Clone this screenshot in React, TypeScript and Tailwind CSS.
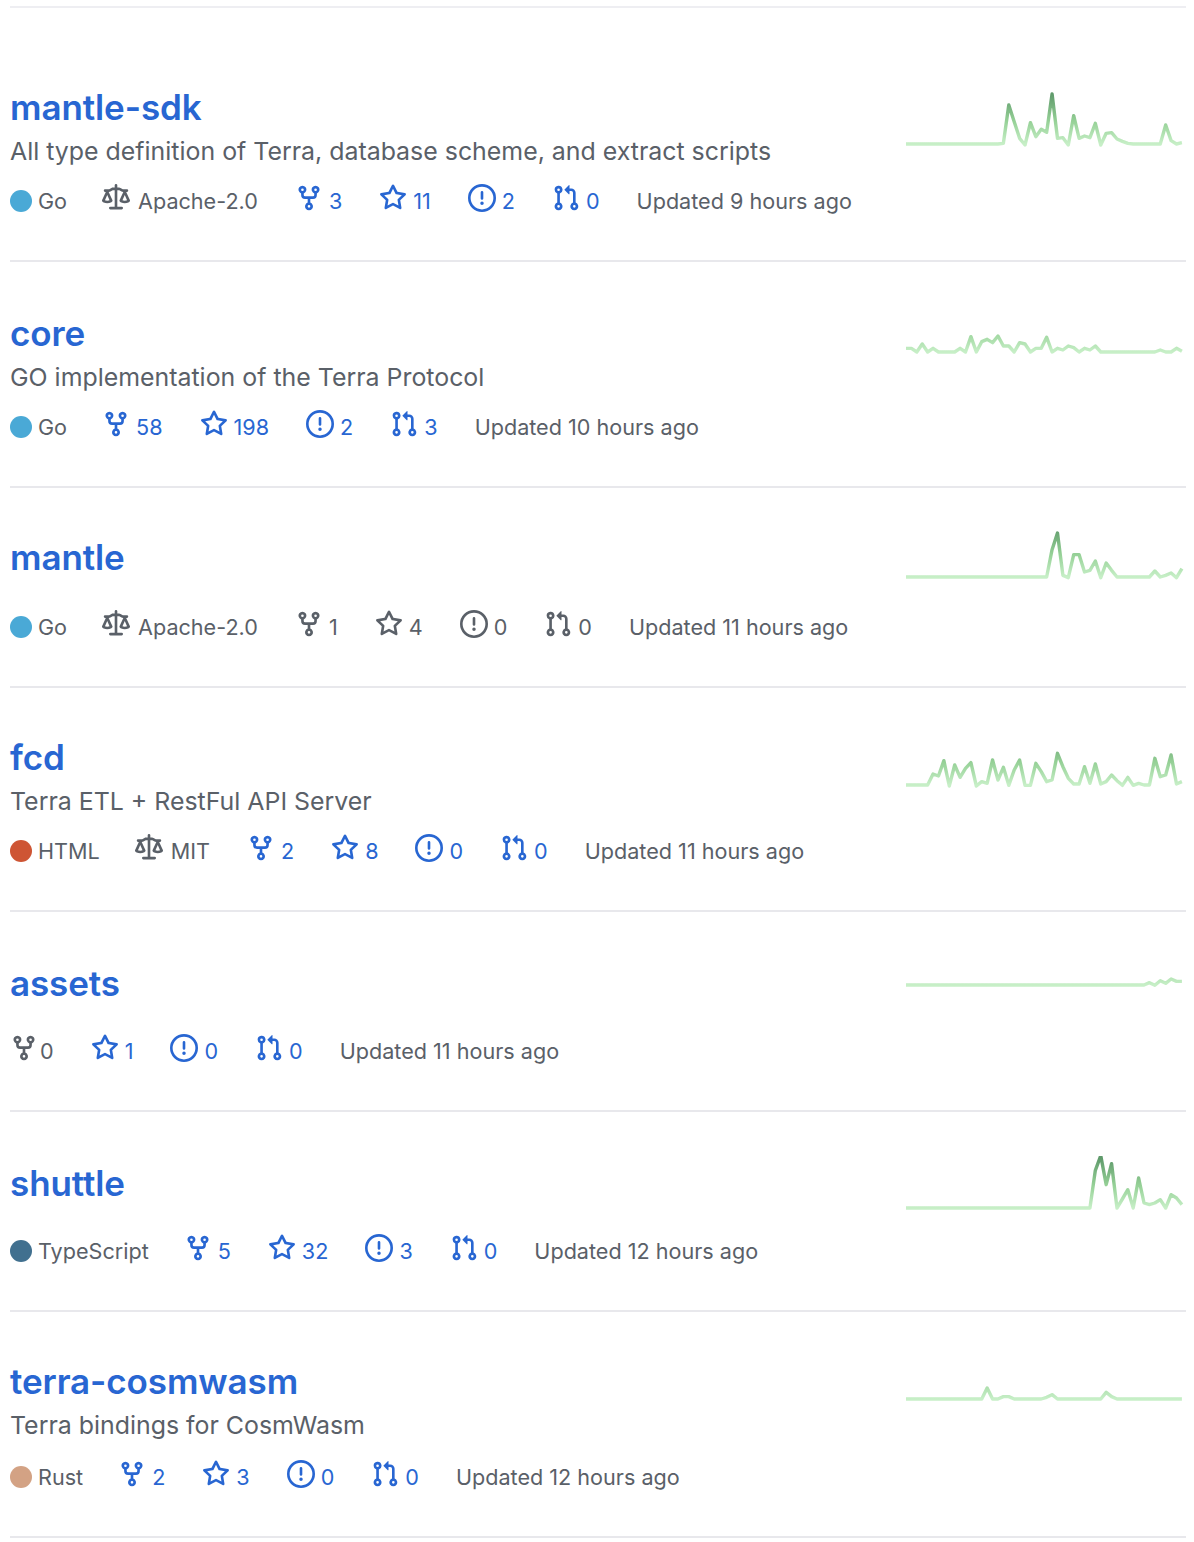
const FORK =
  'M5 3.25a.75.75 0 11-1.5 0 .75.75 0 011.5 0zm0 2.122a2.25 2.25 0 10-1.5 0v.878A2.25 2.25 0 005.75 8.5h1.5v2.128a2.251 2.251 0 101.5 0V8.5h1.5a2.25 2.25 0 002.25-2.25v-.878a2.25 2.25 0 10-1.5 0v.878a.75.75 0 01-.75.75h-4.5A.75.75 0 015 6.25v-.878zm3.75 7.378a.75.75 0 11-1.5 0 .75.75 0 011.5 0zm3-8.75a.75.75 0 100-1.5.75.75 0 000 1.5z';
const STAR =
  'M8 .25a.75.75 0 01.673.418l1.882 3.815 4.21.612a.75.75 0 01.416 1.279l-3.046 2.97.719 4.192a.75.75 0 01-1.088.791L8 12.347l-3.766 1.98a.75.75 0 01-1.088-.79l.72-4.194L.818 6.374a.75.75 0 01.416-1.28l4.21-.611L7.327.668A.75.75 0 018 .25zm0 2.445L6.615 5.5a.75.75 0 01-.564.41l-3.097.45 2.24 2.184a.75.75 0 01.216.664l-.528 3.084 2.769-1.456a.75.75 0 01.698 0l2.77 1.456-.53-3.084a.75.75 0 01.216-.664l2.24-2.183-3.096-.45a.75.75 0 01-.564-.41L8 2.694v.001z';
const ISSUE =
  'M8 1.5a6.5 6.5 0 100 13 6.5 6.5 0 000-13zM0 8a8 8 0 1116 0A8 8 0 010 8zm9 3a1 1 0 11-2 0 1 1 0 012 0zm-.25-6.25a.75.75 0 00-1.5 0v3.5a.75.75 0 001.5 0v-3.5z';
const PULL =
  'M7.177 3.073L9.573.677A.25.25 0 0110 .854v4.792a.25.25 0 01-.427.177L7.177 3.427a.25.25 0 010-.354zM3.75 2.5a.75.75 0 100 1.5.75.75 0 000-1.5zm-2.25.75a2.25 2.25 0 113 2.122v5.256a2.251 2.251 0 11-1.5 0V5.372A2.25 2.25 0 011.5 3.25zM11 2.5h-1V4h1a1 1 0 011 1v5.628a2.251 2.251 0 101.5 0V5A2.5 2.5 0 0011 2.5zm1 10.25a.75.75 0 111.5 0 .75.75 0 01-1.5 0zM3.75 12a.75.75 0 100 1.5.75.75 0 000-1.5z';
const LAW =
  'M8.75.75a.75.75 0 00-1.5 0V2h-.984c-.305 0-.604.08-.869.23l-1.288.737A.25.25 0 013.984 3H1.75a.75.75 0 000 1.5h.428L.066 9.192a.75.75 0 00.154.838l.53-.53-.53.53v.001l.002.002.002.002.006.006.016.015.045.04a3.514 3.514 0 00.686.45A4.492 4.492 0 003 11c.88 0 1.556-.22 2.023-.454a3.515 3.515 0 00.686-.45l.045-.04.016-.015.006-.006.002-.002.001-.002L5.25 9.5l.53.53a.75.75 0 00.154-.838L3.822 4.5h.162c.305 0 .604-.08.869-.23l1.289-.737a.25.25 0 01.124-.033h.984V13h-2.5a.75.75 0 000 1.5h6.5a.75.75 0 000-1.5h-2.5V3.5h.984a.25.25 0 01.124.033l1.29.736c.264.152.563.231.868.231h.162l-2.112 4.692a.75.75 0 00.154.838l.53-.53-.53.53v.001l.002.002.002.002.006.006.016.015.045.04a3.517 3.517 0 00.686.45A4.492 4.492 0 0013 11c.88 0 1.556-.22 2.023-.454a3.512 3.512 0 00.686-.45l.045-.04.01-.01.006-.005.006-.006.002-.002.001-.002-.529-.531.53.53a.75.75 0 00.154-.838L13.823 4.5h.427a.75.75 0 000-1.5h-2.234a.25.25 0 01-.124-.033l-1.29-.736A1.75 1.75 0 009.735 2H8.75V.75zM1.695 9.227c.285.135.718.273 1.305.273s1.02-.138 1.305-.273L3 6.327l-1.305 2.9zm10 0c.285.135.718.273 1.305.273s1.02-.138 1.305-.273L13 6.327l-1.305 2.9z';

type Repo = {
  name: string;
  desc?: string;
  lang?: string;
  dot?: string;
  license?: string;
  forks: number;
  stars: number;
  issues: number;
  pulls: number;
  updated: string;
  blue: boolean;
  tightFork?: boolean;
  pad: string;
  metaTop: string;
  chartTop: string;
  base: number;
  spikes: Record<number, number>;
};

const repos: Repo[] = [
  {
    name: 'mantle-sdk',
    desc: 'All type definition of Terra, database scheme, and extract scripts',
    lang: 'Go',
    dot: 'bg-[#4aa9d6]',
    license: 'Apache-2.0',
    forks: 3,
    stars: 11,
    issues: 2,
    pulls: 0,
    updated: 'Updated 9 hours ago',
    blue: true,
    pad: 'pt-[77px]',
    metaTop: 'mt-[14px]',
    chartTop: 'mt-[84px]',
    base: 192,
    spikes: { 18: 190, 19: 75, 20: 125, 21: 175, 22: 195, 23: 128, 24: 170, 25: 148, 26: 157, 27: 42, 28: 175, 29: 173, 30: 195, 31: 107, 32: 175, 33: 168, 34: 173, 35: 130, 36: 195, 37: 160, 38: 158, 39: 177, 40: 184, 41: 190, 48: 135, 49: 182, 51: 188 },
  },
  {
    name: 'core',
    desc: 'GO implementation of the Terra Protocol',
    lang: 'Go',
    dot: 'bg-[#4aa9d6]',
    forks: 58,
    stars: 198,
    issues: 2,
    pulls: 3,
    updated: 'Updated 10 hours ago',
    blue: true,
    pad: 'pt-[49px]',
    metaTop: 'mt-[14px]',
    chartTop: 'mt-[38px]',
    base: 96,
    spikes: { 0: 85, 1: 85, 3: 72, 5: 85, 10: 85, 12: 50, 14: 65, 15: 58, 16: 68, 17: 48, 18: 78, 19: 78, 21: 68, 22: 72, 24: 85, 25: 85, 26: 52, 28: 85, 29: 90, 30: 78, 31: 83, 33: 85, 34: 90, 35: 78, 47: 90, 50: 85, 51: 94 },
  },
  {
    name: 'mantle',
    lang: 'Go',
    dot: 'bg-[#4aa9d6]',
    license: 'Apache-2.0',
    forks: 1,
    stars: 4,
    issues: 0,
    pulls: 0,
    updated: 'Updated 11 hours ago',
    blue: false,
    pad: 'pt-[47px]',
    metaTop: 'mt-[32px]',
    chartTop: 'mt-[37px]',
    base: 170,
    spikes: { 27: 88, 28: 38, 29: 165, 30: 172, 31: 103, 32: 103, 33: 155, 34: 150, 35: 122, 36: 172, 37: 128, 38: 150, 46: 152, 48: 165, 49: 158, 50: 172, 51: 145 },
  },
  {
    name: 'fcd',
    desc: 'Terra ETL + RestFul API Server',
    lang: 'HTML',
    dot: 'bg-[#ce5534]',
    license: 'MIT',
    forks: 2,
    stars: 8,
    issues: 0,
    pulls: 0,
    updated: 'Updated 11 hours ago',
    blue: true,
    pad: 'pt-[47px]',
    metaTop: 'mt-[14px]',
    chartTop: 'mt-[45px]',
    base: 135,
    spikes: { 5: 102, 6: 108, 7: 62, 8: 138, 9: 75, 10: 112, 11: 85, 12: 68, 13: 138, 14: 125, 15: 130, 16: 60, 17: 120, 18: 82, 19: 136, 20: 90, 21: 60, 22: 136, 23: 136, 24: 70, 25: 95, 26: 125, 27: 120, 28: 40, 29: 80, 30: 115, 31: 132, 32: 132, 33: 80, 34: 130, 35: 72, 36: 132, 37: 125, 38: 105, 39: 122, 40: 136, 41: 112, 42: 136, 43: 130, 46: 55, 47: 110, 48: 105, 49: 45, 50: 132, 51: 125 },
  },
  {
    name: 'assets',
    forks: 0,
    stars: 1,
    issues: 0,
    pulls: 0,
    updated: 'Updated 11 hours ago',
    blue: true,
    tightFork: true,
    pad: 'pt-[49px]',
    metaTop: 'mt-[30px]',
    chartTop: 'mt-[21px]',
    base: 73,
    spikes: { 45: 66, 46: 74, 47: 60, 48: 68, 49: 55, 50: 62, 51: 62 },
  },
  {
    name: 'shuttle',
    lang: 'TypeScript',
    dot: 'bg-[#41708f]',
    forks: 5,
    stars: 32,
    issues: 3,
    pulls: 0,
    updated: 'Updated 12 hours ago',
    blue: true,
    pad: 'pt-[49px]',
    metaTop: 'mt-[30px]',
    chartTop: 'mt-[44px]',
    base: 205,
    spikes: { 35: 92, 36: 48, 37: 135, 38: 72, 40: 178, 41: 150, 43: 115, 44: 190, 45: 195, 46: 190, 47: 180, 49: 165, 50: 175, 51: 195 },
  },
  {
    name: 'terra-cosmwasm',
    desc: 'Terra bindings for CosmWasm',
    lang: 'Rust',
    dot: 'bg-[#d3a284]',
    forks: 2,
    stars: 3,
    issues: 0,
    pulls: 0,
    updated: 'Updated 12 hours ago',
    blue: true,
    pad: 'pt-[47px]',
    metaTop: 'mt-[16px]',
    chartTop: 'mt-[35px]',
    base: 85,
    spikes: { 15: 52, 18: 78, 19: 78, 26: 80, 27: 72, 37: 65, 38: 78 },
  },
];

function Octicon({ d, className }: { d: string; className?: string }) {
  return (
    <svg viewBox="0 0 16 16" fill="currentColor" className={`h-[28px] w-[28px] shrink-0 -translate-y-[3px] ${className ?? ''}`}>
      <path fillRule="evenodd" d={d} />
    </svg>
  );
}

function Stat({ d, value, className, iconClass }: { d: string; value: number; className: string; iconClass?: string }) {
  return (
    <span className={`mr-[37px] flex items-center ${className}`}>
      <Octicon d={d} className={iconClass ?? 'mr-[6px]'} />
      {value}
    </span>
  );
}

// y values were read off the picture, spikes are offsets from the flat line
function Sparkline({ repo, id }: { repo: Repo; id: string }) {
  const points = Array.from({ length: 52 }, (_, i) => {
    const y = repo.spikes[i] ?? repo.base;
    return `${(2 + i * 5.41).toFixed(2)},${(52 + (y - repo.base) / 3).toFixed(2)}`;
  }).join(' ');

  return (
    <svg viewBox="0 0 280 56" className={`mr-[2px] h-[56px] w-[280px] shrink-0 ${repo.chartTop}`}>
      <defs>
        <linearGradient id={id} gradientUnits="userSpaceOnUse" x1="0" y1="52" x2="0" y2="2">
          <stop offset="0%" stopColor="#c7efc7" />
          <stop offset="45%" stopColor="#96d197" />
          <stop offset="100%" stopColor="#5f9a6b" />
        </linearGradient>
      </defs>
      <polyline points={points} fill="none" stroke={`url(#${id})`} strokeWidth="3.4" strokeLinejoin="round" />
    </svg>
  );
}

function Row({ repo, id }: { repo: Repo; id: string }) {
  const color = repo.blue ? 'text-[#2866d2]' : 'text-[#5a6068]';

  return (
    <div className="flex justify-between border-b-2 border-[#e8e8ec]">
      <div className={`pb-[43px] ${repo.pad}`}>
        <h3 className="text-[35px] leading-[44px] font-semibold tracking-[-0.1px] text-[#2866d2]">{repo.name}</h3>
        {repo.desc && <p className="mt-[2px] h-[40px] text-[24.9px] leading-[40px] text-[#5a6068]">{repo.desc}</p>}
        <div className={`flex h-[32px] items-center text-[21.6px] text-[#5a6068] ${repo.metaTop}`}>
          {repo.lang && (
            <span className="mr-[35px] flex items-center">
              <span className={`mr-[6px] h-[22px] w-[22px] rounded-full ${repo.dot}`} />
              {repo.lang}
            </span>
          )}
          {repo.license && (
            <span className="mr-[37px] flex items-center">
              <Octicon d={LAW} className="mr-[8px]" />
              {repo.license}
            </span>
          )}
          <Stat d={FORK} value={repo.forks} className={repo.tightFork ? 'text-[#5a6068]' : color} iconClass={repo.tightFork ? 'mr-[2px]' : undefined} />
          <Stat d={STAR} value={repo.stars} className={color} />
          <Stat d={ISSUE} value={repo.issues} className={color} />
          <Stat d={PULL} value={repo.pulls} className={color} />
          <span>{repo.updated}</span>
        </div>
      </div>
      <Sparkline repo={repo} id={id} />
    </div>
  );
}

export default function App() {
  return (
    <div className="min-h-[1542px] bg-white pt-[6px] pr-[8px] pl-[10px] font-['Inter','Liberation_Sans',sans-serif]">
      <div className="border-t-2 border-[#eeeef2]">
        {repos.map((repo, i) => (
          <Row key={repo.name} repo={repo} id={`spark-${i}`} />
        ))}
      </div>
    </div>
  );
}
